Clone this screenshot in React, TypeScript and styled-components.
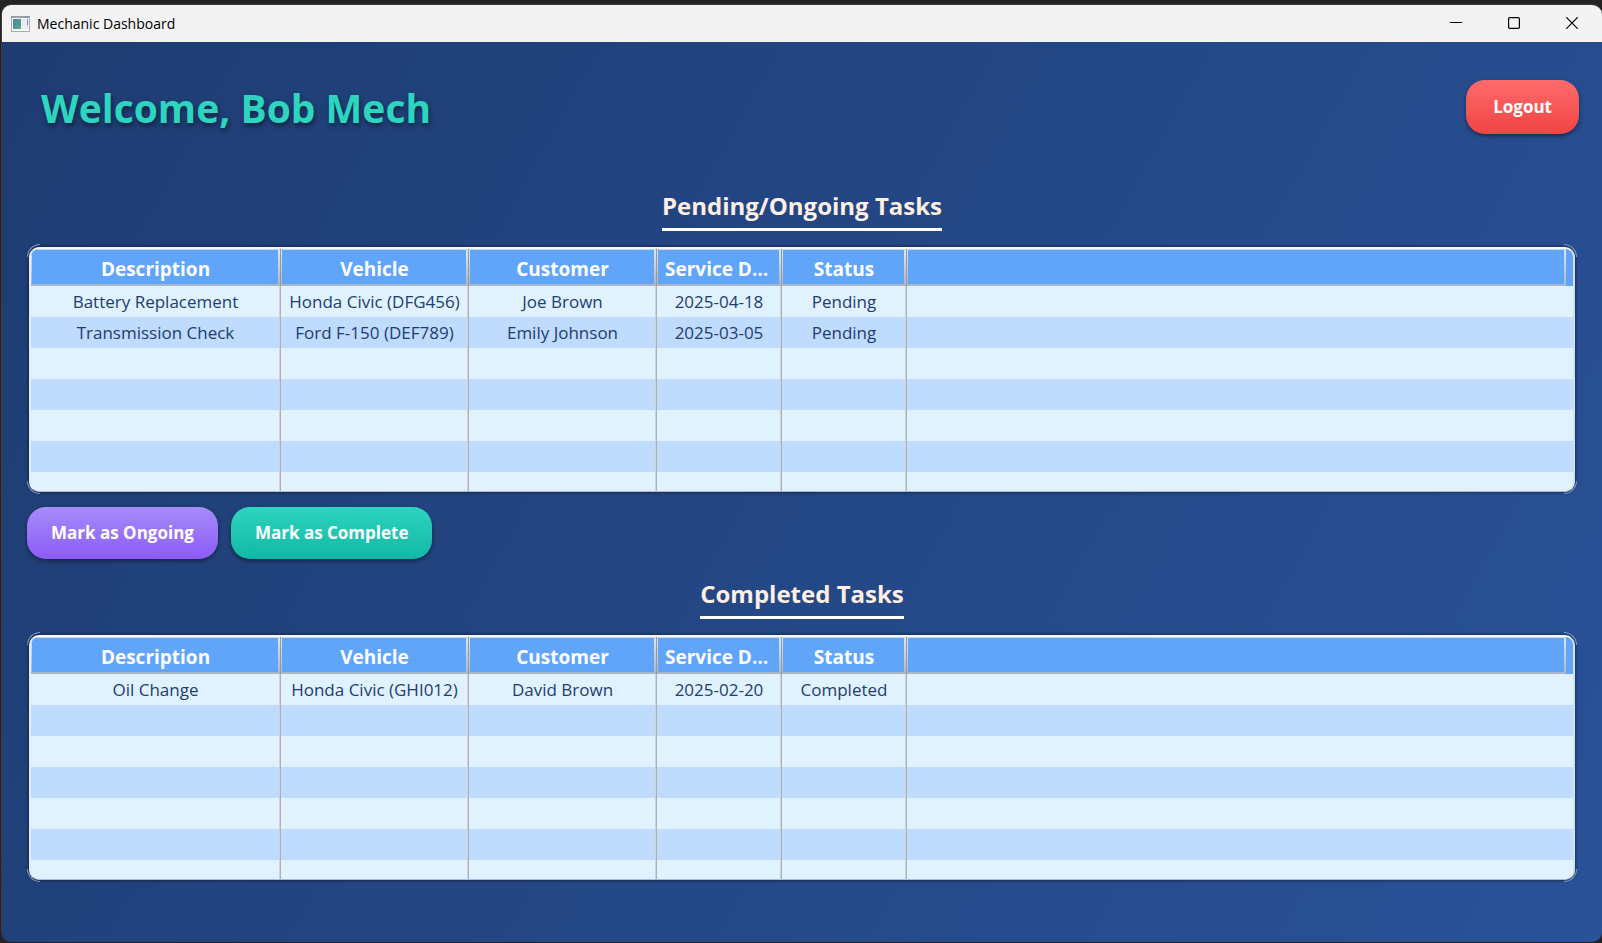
import React from "react";
import styled, { createGlobalStyle } from "styled-components";

const GlobalStyle = createGlobalStyle`
  * { box-sizing: border-box; }
  body { margin: 0; background: #262626; font-family: "Open Sans", "Noto Sans", sans-serif; }
`;

const Desktop = styled.div`
  min-height: 100vh;
  display: flex;
  padding: 4px 0 1px 1px;
  background: #232323;
`;

const Window = styled.div`
  flex: 1;
  min-width: 0;
  display: flex;
  flex-direction: column;
  border: solid #3c3c3c;
  border-width: 1px 0 0 1px;
  border-radius: 10px;
  overflow: hidden;
`;

const TitleBar = styled.header`
  height: 37px;
  display: flex;
  align-items: center;
  padding: 0 1px 0 9px;
  background: #f3f3f3;
  color: #000;
`;

const WindowTitle = styled.span`
  flex: 1;
  margin-left: 7px;
  font-size: 14px;
  line-height: 20px;
`;

const WindowButton = styled.button`
  width: 58px;
  height: 36px;
  display: flex;
  align-items: center;
  justify-content: center;
  align-self: flex-start;
  padding: 0;
  border: 0;
  background: transparent;
  color: #000;
`;

const Content = styled.main`
  flex: 1;
  padding: 38px 25px 60px;
  background: linear-gradient(119deg, #1e3c72, #2a5298);
`;

const PageHeader = styled.div`
  display: flex;
  align-items: center;
  justify-content: space-between;
  margin: 0 -2px 54px 14px;
`;

const Heading = styled.h1`
  margin: 0;
  padding-top: 2px;
  font-size: 39px;
  line-height: 52px;
  font-weight: 700;
  color: #2dd4bf;
  text-shadow: 1px 3px 5px rgba(0, 0, 0, 0.45);
`;

const ActionButton = styled.button<{ $from: string; $to: string; $large?: boolean }>`
  height: ${(p) => (p.$large ? 54 : 52)}px;
  padding: 0 ${(p) => (p.$large ? 27 : 24)}px;
  border: 0;
  border-radius: 19px;
  background: linear-gradient(${(p) => p.$from}, ${(p) => p.$to});
  box-shadow: 0 2px 4px rgba(0, 0, 0, 0.45);
  color: #fff;
  font: 700 17px/24px "Open Sans", sans-serif;
`;

const Section = styled.section`
  display: flex;
  flex-direction: column;
`;

const SectionTitle = styled.h2`
  align-self: center;
  height: 43px;
  margin: 0 0 13px;
  border-bottom: 3px solid #fff;
  color: #ffefe5;
  font-size: 24px;
  line-height: 36px;
  font-weight: 700;
`;

const TableShell = styled.div`
  position: relative;
  padding: 3px 2px 2px;
`;

const corners = {
  topLeft: "top: 0; left: 0; border-width: 1px 0 0 1px; border-top-left-radius: 13px;",
  topRight: "top: 0; right: 0; border-width: 1px 1px 0 0; border-top-right-radius: 13px;",
  bottomLeft: "bottom: 0; left: 0; border-width: 0 0 1px 1px; border-bottom-left-radius: 13px;",
  bottomRight: "bottom: 0; right: 0; border-width: 0 1px 1px 0; border-bottom-right-radius: 13px;",
};

const Corner = styled.span<{ $at: keyof typeof corners }>`
  position: absolute;
  width: 13px;
  height: 13px;
  border: 0 solid #7f9ac4;
  ${(p) => corners[p.$at]}
`;

const TableFrame = styled.div`
  height: 245px;
  border: solid;
  border-width: 2px 2px 1px;
  border-color: #f4f8fc #d3e2f1 #a9bcd6 #e2ecf6;
  border-radius: 10px;
  overflow: hidden;
  background: #e0f2fe;
  box-shadow: 0 0 3px 1px rgba(0, 0, 0, 0.4);
`;

const TaskTable = styled.table`
  width: 100%;
  table-layout: fixed;
  border-collapse: separate;
  border-spacing: 0;
`;

const HeadCell = styled.th`
  height: 37px;
  padding: 3px 8px 0;
  overflow: hidden;
  white-space: nowrap;
  text-overflow: ellipsis;
  border-right: 1px solid #999;
  background:
    linear-gradient(#a9b6ca, #a9b6ca) bottom / 100% 2px no-repeat,
    linear-gradient(#c4d8f2, #c4d8f2) top / 100% 1px no-repeat,
    linear-gradient(#dce6f2, #a9b6ca) left / 1px 100% no-repeat,
    linear-gradient(#dce6f2, #a9b6ca) right / 2px 100% no-repeat,
    #60a5fa;
  color: #fff;
  font-size: 19px;
  line-height: 24px;
  font-weight: 700;
`;

const FillerHead = styled(HeadCell)`
  border-right: 0;
`;

const HeadCorner = styled.td`
  padding: 0;
  background: #60a5fa;
`;

const Row = styled.tr`
  background: #e0f2fe;
  &:nth-child(even) { background: #bfdbfe; }
`;

const Cell = styled.td`
  height: 31px;
  padding: 0 4px;
  white-space: nowrap;
  text-align: center;
  color: #1e3c72;
  font-size: 17px;
  line-height: 24px;
  border-right: 1px solid #b0b0b0;
  box-shadow: inset -1px 0 #cdd3d8;
`;

const FillerCell = styled.td`
  padding: 0;
`;

const Actions = styled.div`
  display: flex;
  gap: 13px;
  margin: 13px 0 17px;
`;

const columns = [
  { label: "Description", width: 250 },
  { label: "Vehicle", width: 188 },
  { label: "Customer", width: 188 },
  { label: "Service Date", width: 125 },
  { label: "Status", width: 125 },
];

const VISIBLE_ROWS = 7;

function Tasks({ rows }: { rows: string[][] }) {
  const blanks = Array.from({ length: VISIBLE_ROWS - rows.length }, () => columns.map(() => ""));
  return (
    <TableShell>
      <Corner $at="topLeft" />
      <Corner $at="topRight" />
      <Corner $at="bottomLeft" />
      <Corner $at="bottomRight" />
      <TableFrame>
        <TaskTable>
          <colgroup>
            {columns.map((c) => <col key={c.label} width={c.width} />)}
            <col />
            <col width={7} />
          </colgroup>
          <thead>
            <tr>
              {columns.map((c) => <HeadCell key={c.label} scope="col">{c.label}</HeadCell>)}
              <FillerHead as="td" />
              <HeadCorner />
            </tr>
          </thead>
          <tbody>
            {[...rows, ...blanks].map((row, i) => (
              <Row key={i}>
                {row.map((value, j) => <Cell key={j}>{value}</Cell>)}
                <FillerCell colSpan={2} />
              </Row>
            ))}
          </tbody>
        </TaskTable>
      </TableFrame>
    </TableShell>
  );
}

function AppIcon() {
  return (
    <svg width="19" height="16" viewBox="0 0 19 16" aria-hidden="true">
      <defs>
        <linearGradient id="pane" x1="0" y1="0" x2="1" y2="1">
          <stop offset="0" stopColor="#4a7fb5" />
          <stop offset="1" stopColor="#55ad7c" />
        </linearGradient>
      </defs>
      <rect x="0.5" y="0.5" width="18" height="15" fill="#f7f7f7" stroke="#a9adad" />
      <path d="M0 1H19" stroke="#9aa0a8" strokeWidth="2" />
      <path d="M14 1h1M16 1h1" stroke="#5d6f9c" />
      <rect x="2" y="3" width="8" height="10" fill="url(#pane)" />
      <rect x="11" y="3" width="4" height="10" fill="#e9edef" />
      <rect x="16" y="3" width="1" height="6" fill="#5a8fc0" />
      <rect x="16" y="9" width="1" height="4" fill="#c3dccd" />
    </svg>
  );
}

export default function App() {
  return (
    <Desktop>
      <GlobalStyle />
      <Window>
        <TitleBar>
          <AppIcon />
          <WindowTitle>Mechanic Dashboard</WindowTitle>
          <WindowButton aria-label="Minimize">
            <svg width="12" height="12" viewBox="0 0 12 12"><path d="M0 5.5H12" stroke="currentColor" /></svg>
          </WindowButton>
          <WindowButton aria-label="Maximize">
            <svg width="12" height="12" viewBox="0 0 12 12">
              <rect x="0.6" y="0.6" width="10.8" height="10.8" rx="1.2" fill="none" stroke="currentColor" strokeWidth="1.2" />
            </svg>
          </WindowButton>
          <WindowButton aria-label="Close">
            <svg width="12" height="12" viewBox="0 0 12 12">
              <path d="M0.3 0.3L11.7 11.7M11.7 0.3L0.3 11.7" stroke="currentColor" strokeWidth="1.2" />
            </svg>
          </WindowButton>
        </TitleBar>
        <Content>
          <PageHeader>
            <Heading>Welcome, Bob Mech</Heading>
            <ActionButton $large $from="#ff6b6b" $to="#ef4444">Logout</ActionButton>
          </PageHeader>
          <Section>
            <SectionTitle>Pending/Ongoing Tasks</SectionTitle>
            <Tasks
              rows={[
                ["Battery Replacement", "Honda Civic (DFG456)", "Joe Brown", "2025-04-18", "Pending"],
                ["Transmission Check", "Ford F-150 (DEF789)", "Emily Johnson", "2025-03-05", "Pending"],
              ]}
            />
          </Section>
          <Actions>
            <ActionButton $from="#a78bfa" $to="#8b5cf6">Mark as Ongoing</ActionButton>
            <ActionButton $from="#2dd4bf" $to="#14b8a6">Mark as Complete</ActionButton>
          </Actions>
          <Section>
            <SectionTitle>Completed Tasks</SectionTitle>
            <Tasks rows={[["Oil Change", "Honda Civic (GHI012)", "David Brown", "2025-02-20", "Completed"]]} />
          </Section>
        </Content>
      </Window>
    </Desktop>
  );
}
